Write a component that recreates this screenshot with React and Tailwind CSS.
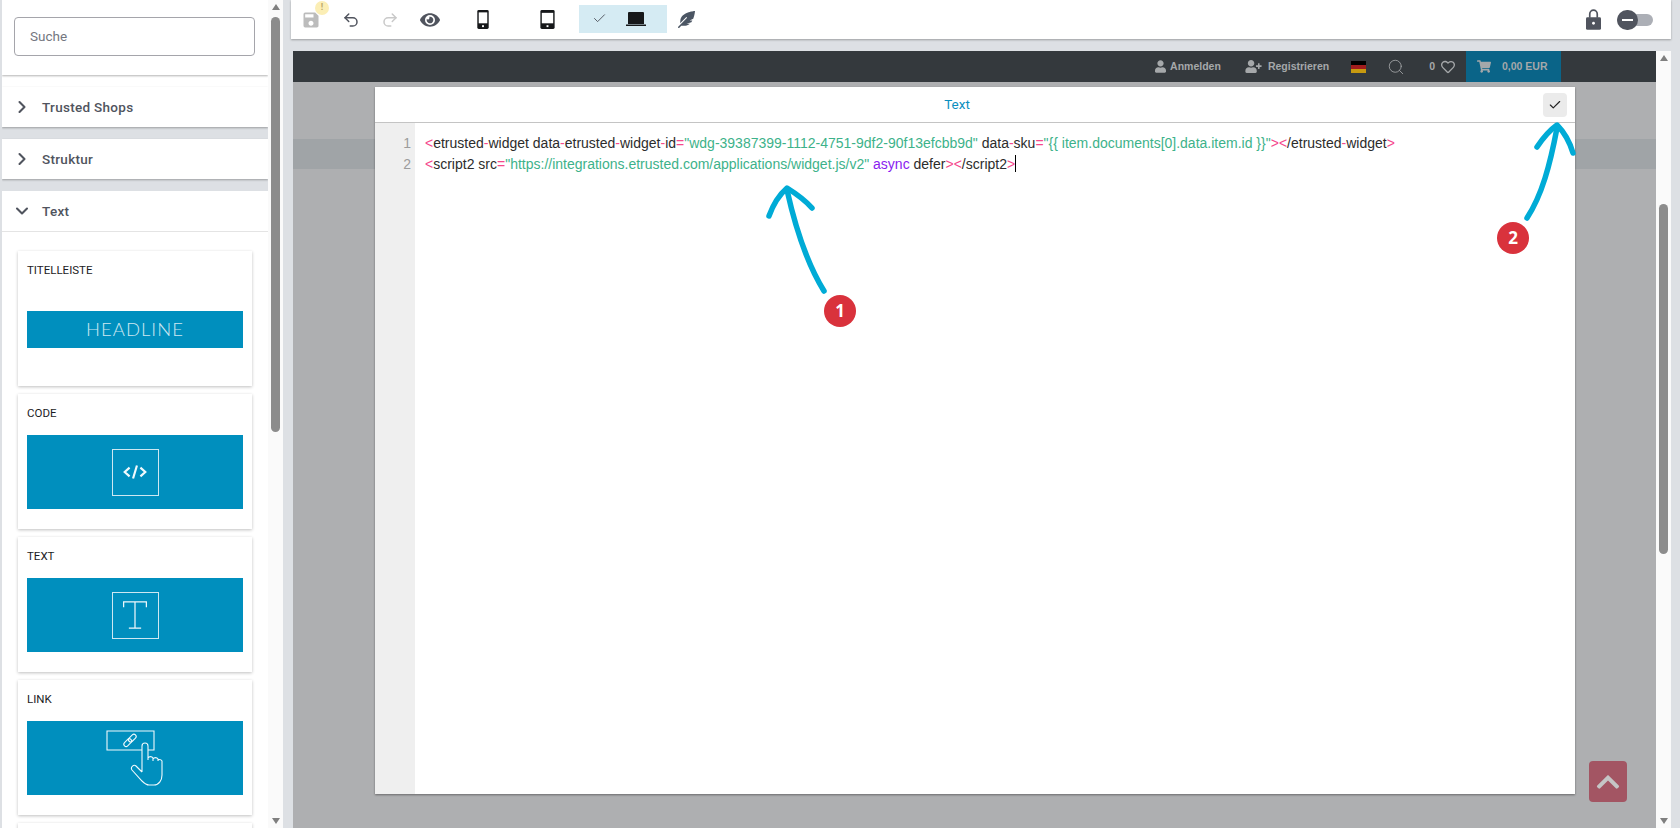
import { Check, ChevronDown, ChevronRight, Redo2, Search, Undo2 } from "lucide-react";
import { FaChevronUp, FaEye, FaFeatherAlt, FaRegHeart, FaShoppingCart, FaUser, FaUserPlus } from "react-icons/fa";
import { MdSave } from "react-icons/md";

function Section({ title, open }) {
  return (
    <div className={`flex shrink-0 items-center bg-white text-[#50545e] ${open ? "h-[41px] border-b border-[#e4e4e4]" : "mb-3 h-10 shadow-[0_1px_2px_rgba(0,0,0,0.3)]"}`}>
      <span className="flex w-10 justify-center">
        {open ? <ChevronDown className="h-5 w-5" strokeWidth={2.5} /> : <ChevronRight className="h-5 w-5" strokeWidth={2.5} />}
      </span>
      <span className="text-[13.5px] font-medium tracking-[0.3px]">{title}</span>
    </div>
  );
}

function ComponentCard({ title, children, imageClass = "h-[74px] mt-[13px]" }) {
  return (
    <div className="mb-2 h-[135px] shrink-0 bg-white px-[9px] pt-[11px] shadow-[0_1px_3px_rgba(0,0,0,0.25)]">
      <div className="flex h-[17px] items-center text-[11.5px] leading-none text-[#1c1c24]">{title}</div>
      <div className={`flex w-[216px] items-center justify-center bg-[#008fbe] ${imageClass}`}>{children}</div>
    </div>
  );
}

function Sidebar() {
  return (
    <div className="ml-[2px] flex h-full shrink-0">
      <div className="flex h-full w-[266px] flex-col overflow-hidden bg-white">
        <div className="mb-3 h-[75px] shrink-0 bg-white px-3 pt-[17px] shadow-[0_1px_2px_rgba(0,0,0,0.3)]">
          <div className="flex h-[39px] w-[241px] items-center rounded border border-[#a5a5ab] px-[15px] text-[13.5px] text-[#74777f]">Suche</div>
        </div>
        <div className="flex h-full flex-col bg-[#dde0e4]">
          <Section title="Trusted Shops" />
          <Section title="Struktur" />
          <Section title="Text" open />
          <div className="flex grow flex-col bg-white pl-4 pt-[19px]">
            <div className="w-[234px]">
              <ComponentCard title="TITELLEISTE" imageClass="mt-[32px] h-[37px]">
                <span className="font-['Lato',sans-serif] text-[18.5px] font-light tracking-[1px] text-[#cde8f2]">HEADLINE</span>
              </ComponentCard>
              <ComponentCard title="CODE">
                <div className="flex h-[47px] w-[47px] items-center justify-center border border-[#cde8f2]">
                  <svg viewBox="0 0 24 24" className="h-[26px] w-[26px]" fill="none" stroke="#f0f9fc" strokeWidth="2">
                    <path d="M7 8l-4.5 4L7 16M17 8l4.5 4L17 16M13.8 6l-3.6 12" />
                  </svg>
                </div>
              </ComponentCard>
              <ComponentCard title="TEXT">
                <div className="flex h-[47px] w-[47px] items-center justify-center border border-[#cde8f2]">
                  <svg viewBox="0 0 32 36" className="h-[32px] w-[28px]" fill="none" stroke="#f0f9fc" strokeWidth="1.4">
                    <path d="M3 9V3h26v6M3 3h26M16 3v30M9 33h14" />
                  </svg>
                </div>
              </ComponentCard>
              <ComponentCard title="LINK">
                <svg viewBox="0 0 60 56" className="h-[56px] w-[60px]" fill="none" stroke="#f0f9fc" strokeWidth="1.1">
                  <path d="M37 20H2V1h47v19h-6" />
                  <g transform="rotate(-45 25 10)">
                    <rect x="17" y="8" width="9" height="4.500" rx="2.250" />
                    <rect x="23.500" y="8" width="9" height="4.500" rx="2.250" />
                  </g>
                  <path transform="translate(1 0)" d="M36 42V16a3 3 0 0 1 6 0v14m0 0v-2a3 3 0 0 1 5 0v3m0-2a3 3 0 0 1 5 0v2m0-1a3 3 0 0 1 4 1v14c0 5-3 10-8 10H43c-3 0-5-2-7-4L26 40c-2-3 2-6 4-4l6 6" />
                </svg>
              </ComponentCard>
              <div className="h-10 bg-white shadow-[0_1px_3px_rgba(0,0,0,0.25)]" />
            </div>
          </div>
        </div>
      </div>
      <Scrollbar thumbClass="mt-[7px] h-[415px]" />
    </div>
  );
}

function Scrollbar({ thumbClass }) {
  return (
    <div className="flex h-full w-[15px] shrink-0 flex-col items-center bg-[#fafafa]">
      <div className="mt-[4px] h-0 w-0 border-x-[4.5px] border-b-[6px] border-x-transparent border-b-[#7f7f7f]" />
      <div className={`w-[9px] rounded-[5px] bg-[#8c8c8c] ${thumbClass}`} />
      <div className="mb-[4px] mt-auto h-0 w-0 border-x-[4.5px] border-t-[6px] border-x-transparent border-t-[#7f7f7f]" />
    </div>
  );
}

function Toolbar() {
  return (
    <div className="flex h-[39px] w-[1380px] shrink-0 items-center bg-white pl-[12px] shadow-[0_1px_2px_rgba(0,0,0,0.3)]">
      <span className="relative flex w-[16px] justify-center">
        <MdSave className="h-[20px] w-[20px] shrink-0 text-[#bcbcbc]" />
        <span className="absolute -right-[10px] -top-[9px] flex h-[14px] w-[14px] items-center justify-center rounded-full bg-[#fbeeb5] text-[9px] font-bold text-[#b9a86a]">!</span>
      </span>
      <Undo2 className="ml-[23px] h-[18px] w-[18px] text-[#50545e]" />
      <Redo2 className="ml-[21px] h-[18px] w-[18px] text-[#c9c9c9]" />
      <FaEye className="ml-[21px] h-[20px] w-[20px] text-[#50545e]" />
      <svg viewBox="0 0 12 20" className="ml-[37px] h-[19px] w-[12px]">
        <rect width="12" height="20" rx="1.500" fill="#16181a" />
        <rect x="1.500" y="2.500" width="9" height="11.500" fill="#fff" />
        <rect x="5" y="16" width="2" height="2" fill="#fff" />
      </svg>
      <svg viewBox="0 0 15 20" className="ml-[51px] h-[19px] w-[15px]">
        <rect width="15" height="20" rx="1.500" fill="#16181a" />
        <rect x="1.500" y="3" width="12" height="11" fill="#fff" />
        <rect x="6.500" y="16" width="2" height="2" fill="#fff" />
      </svg>
      <div className="ml-[24px] mb-[2px] flex h-[28px] w-[88px] items-center bg-[#d5ebf3]">
        <Check className="ml-[13px] h-[15px] w-[15px] text-[#50545e]" strokeWidth={1.5} />
        <svg viewBox="0 0 20 16" className="ml-[19px] h-[16px] w-[20px]">
          <path d="M3 1h14a1 1 0 0 1 1 1v11H2V2a1 1 0 0 1 1-1z" fill="#16181a" />
          <rect x="0" y="13.500" width="20" height="1.500" fill="#16181a" />
        </svg>
      </div>
      <FaFeatherAlt className="ml-[11px] h-[17px] w-[17px] text-[#4b5563]" />
      <svg viewBox="0 0 16 22" className="ml-auto h-[21px] w-[15px]">
        <path d="M4 9V5a4 4 0 0 1 8 0v4" fill="none" stroke="#50545e" strokeWidth="1.800" />
        <rect y="8.500" width="16" height="13.500" rx="1.500" fill="#50545e" />
        <circle cx="8" cy="15" r="1.500" fill="#fff" />
      </svg>
      <div className="relative ml-[16px] mr-[18px] h-[12px] w-[36px] rounded-full bg-[#acafb6]">
        <span className="absolute -top-1 left-0 flex h-5 w-[21px] items-center justify-center rounded-full bg-[#50545e]">
          <span className="h-[2px] w-[11px] bg-white" />
        </span>
      </div>
    </div>
  );
}

function ShopHeader() {
  return (
    <div className="flex h-[31px] shrink-0 items-center justify-end bg-[#34393d] pr-[95px] font-['Liberation_Sans',sans-serif] text-[10.5px] font-bold text-[#a5a8aa]">
      <FaUser className="h-[13px] w-[11px]" />
      <span className="ml-[4px]">Anmelden</span>
      <FaUserPlus className="ml-[24px] h-[13px] w-[17px]" />
      <span className="ml-[6px]">Registrieren</span>
      <div className="ml-[22px] flex h-[12px] w-[15px] flex-col">
        <span className="h-1 bg-black" />
        <span className="h-1 bg-[#a01d1d]" />
        <span className="h-1 bg-[#c79a10]" />
      </div>
      <Search className="ml-[21px] h-[18px] w-[18px] text-[#a5a8aa]" strokeWidth={1.1} />
      <span className="ml-[24px]">0</span>
      <FaRegHeart className="ml-[6px] h-[14px] w-[14px]" />
      <div className="ml-[11px] flex h-full w-[95px] items-center bg-[#0a6488] pl-[11px]">
        <FaShoppingCart className="h-[13px] w-[14px]" />
        <span className="ml-[11px]">0,00 EUR</span>
      </div>
    </div>
  );
}

const pink = "text-[#f5488c]";
const green = "text-[#3db28a]";

function CodeEditor() {
  return (
    <div className="flex grow">
      <div className="w-[40px] shrink-0 bg-[#efefef] pr-[4px] pt-[10px] text-right font-['Liberation_Sans',sans-serif] text-[14px] leading-[21px] text-[#9c9c9c]">
        <div>1</div>
        <div>2</div>
      </div>
      <div className="grow whitespace-pre pl-[10px] pt-[10px] font-['Liberation_Sans',sans-serif] text-[14px] leading-[21px] text-[#2c2c2c]">
        <div>
          <span className={pink}>&lt;</span>etrusted<span className={pink}>-</span>widget data<span className={pink}>-</span>etrusted<span className={pink}>-</span>widget<span className={pink}>-</span>id<span className={pink}>=</span>
          <span className={green}>"wdg-39387399-1112-4751-9df2-90f13efcbb9d"</span> data<span className={pink}>-</span>sku<span className={pink}>=</span>
          <span className={green}>"{"{{"} item.documents[0].data.item.id {"}}"}"</span>
          <span className={pink}>&gt;&lt;</span>/etrusted<span className={pink}>-</span>widget<span className={pink}>&gt;</span>
        </div>
        <div className="h-[21px]">
          <span className={pink}>&lt;</span>script2 src<span className={pink}>=</span>
          <span className={green}>"https://integrations.etrusted.com/applications/widget.js/v2"</span> <span className="text-[#8a1cf0]">async</span> defer<span className={pink}>&gt;&lt;</span>/script2<span className={pink}>&gt;</span>
          <span className="-mt-1 inline-block h-[17px] w-px translate-y-[3px] bg-black align-baseline" />
        </div>
      </div>
    </div>
  );
}

function Modal() {
  return (
    <div className="absolute left-[82px] top-[36px] flex h-[707px] w-[1200px] flex-col bg-white shadow-[0_1px_2px_rgba(0,0,0,0.4)]">
      <div className="relative flex h-[36px] shrink-0 items-center justify-center border-b border-[#c4c4c4] pr-[36px] text-[13.5px] text-[#0b8fbf]">
        Text
        <span className="absolute right-[8px] top-[6px] flex h-[24px] w-[24px] items-center justify-center rounded-sm bg-[#ebebeb]">
          <Check className="h-[14px] w-[14px] text-[#222]" strokeWidth={2} />
        </span>
      </div>
      <CodeEditor />
    </div>
  );
}

function Canvas() {
  return (
    <div className="relative ml-[2px] mt-3 flex grow overflow-hidden">
      <div className="relative w-[1363px] shrink-0 bg-[#aeafb1]">
        <ShopHeader />
        <div className="mt-[57px] h-[30px] bg-[#a0a4a7]" />
        <Modal />
        <div className="absolute bottom-[26px] left-[1296px] flex h-[41px] w-[38px] items-center justify-center rounded-sm bg-[#a35563]">
          <FaChevronUp className="h-[26px] w-[26px] text-[#c5c5c5]" />
        </div>
      </div>
      <Scrollbar thumbClass="mt-[143px] h-[350px]" />
    </div>
  );
}

function Annotations() {
  return (
    <svg className="pointer-events-none absolute left-0 top-0 h-[828px] w-[1680px]" viewBox="0 0 1680 828" fill="none" stroke="#00abd6" strokeWidth="5.500" strokeLinecap="round" strokeLinejoin="round">
      <path d="M824 291C808 265 797 235 787 190" />
      <path d="M769 216C773 205 779 195 787 188C795 193 805 200 812 208" />
      <path d="M1527 218C1542 195 1550 165 1557 128" />
      <path d="M1537 147C1543 138 1550 130 1557 125C1564 132 1570 143 1573 153" />
      <circle cx="840" cy="311" r="16" fill="#d9323c" stroke="none" />
      <text x="840" y="317" textAnchor="middle" fill="#fff" stroke="none" fontSize="17" fontWeight="700" fontFamily="Open Sans, sans-serif">1</text>
      <circle cx="1513" cy="238" r="16" fill="#d9323c" stroke="none" />
      <text x="1513" y="244" textAnchor="middle" fill="#fff" stroke="none" fontSize="17" fontWeight="700" fontFamily="Open Sans, sans-serif">2</text>
    </svg>
  );
}

export default function App() {
  return (
    <div className="relative flex h-screen w-full overflow-hidden bg-[#dde0e4] font-['Roboto',sans-serif]">
      <Sidebar />
      <div className="ml-2 flex h-full grow flex-col">
        <Toolbar />
        <Canvas />
      </div>
      <Annotations />
    </div>
  );
}
